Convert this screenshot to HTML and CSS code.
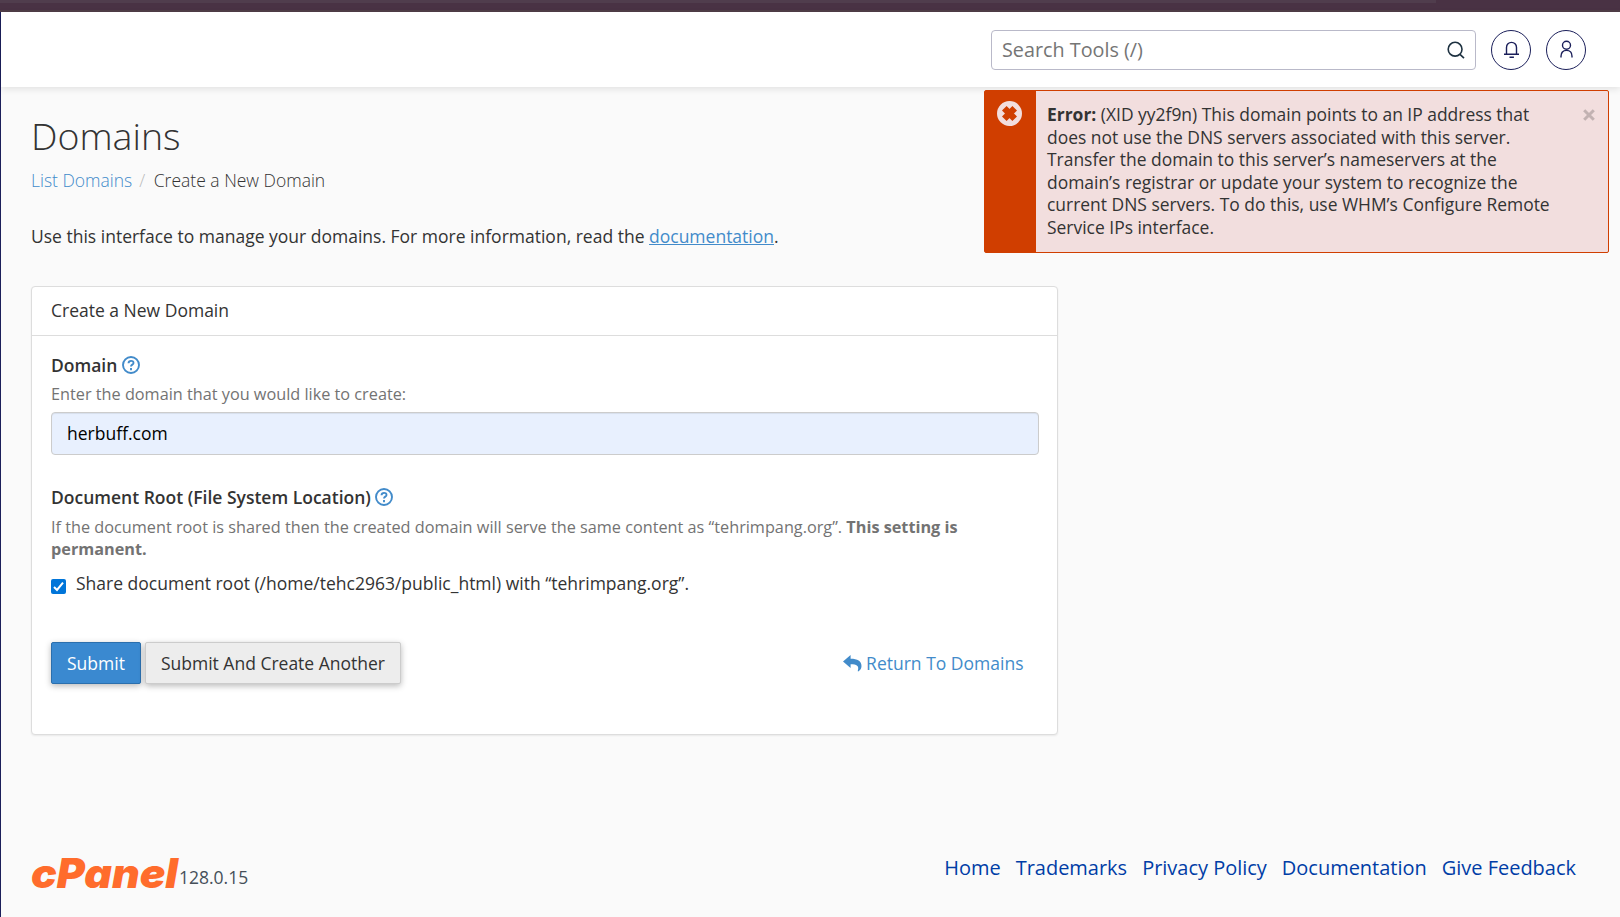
FILE: index.html
```html
<!DOCTYPE html>
<html lang="en">
<head>
<meta charset="utf-8">
<title>Domains</title>
<link rel="stylesheet" href="styles.css">
</head>
<body>
<div class="chrome"><div class="chrome-tab"></div></div>
<div class="page">
  <header class="topbar">
    <div class="search">
      <input class="search-input" type="text" placeholder="Search Tools (/)">
      <svg class="search-icon" viewBox="0 0 18 18"><circle cx="8.1" cy="8.200" r="6.9"/><path d="M13 13.300l4 3.8"/></svg>
    </div>
    <button class="round" aria-label="Notifications"><svg class="round-icon" viewBox="0 0 18 18"><path d="M2 14.200h15M4.500 14.200V7.400a5 5 0 0 1 10 0v6.800M7.500 17.300h4.400"/></svg></button>
    <button class="round" aria-label="Account"><svg class="round-icon" viewBox="0 0 18 18"><circle cx="9.500" cy="5.300" r="4"/><path d="M4 17.500v-1.200c0-3.600 2-5.900 5.500-5.900s5.500 2.300 5.500 5.900v1.200"/></svg></button>
  </header>

  <main class="content">
    <h1 class="title">Domains</h1>
    <nav class="crumbs"><a class="link">List Domains</a><span class="sep">/</span><span>Create a New Domain</span></nav>
    <p class="intro">Use this interface to manage your domains. For more information, read the <a class="link underlined">documentation</a>.</p>

    <section class="panel">
      <div class="panel-head">Create a New Domain</div>
      <div class="panel-body">
        <div class="label">Domain <svg class="help" viewBox="0 0 18 18"><circle cx="9" cy="9" r="8"/><path d="M6.500 7.200C6.700 4.100 11.500 4.100 11.500 6.900C11.500 8.700 9 8.600 9 10.600M9 12.100v2.100"/></svg></div>
        <div class="hint">Enter the domain that you would like to create:</div>
        <input class="field" type="text" value="herbuff.com">
        <div class="label label-root">Document Root (File System Location) <svg class="help" viewBox="0 0 18 18"><circle cx="9" cy="9" r="8"/><path d="M6.500 7.200C6.700 4.100 11.500 4.100 11.500 6.900C11.500 8.700 9 8.600 9 10.600M9 12.100v2.100"/></svg></div>
        <div class="hint hint-root">If the document root is shared then the created domain will serve the same content as “tehrimpang.org”. <b>This setting is permanent.</b></div>
        <div class="check"><span class="box"><svg viewBox="0 0 15 15"><path d="M3 8l3 3 6-7.300"/></svg></span>Share document root (/home/tehc2963/public_html) with “tehrimpang.org”.</div>
        <div class="actions">
          <button class="btn primary">Submit</button>
          <button class="btn">Submit And Create Another</button>
          <a class="link back"><svg class="reply" viewBox="0 0 19 17"><path d="M0 6.500L7.600 0v3.700C14.500 3.700 18.500 6 18.500 11c0 2.300-1.300 4.300-2.900 5.300-.5.300-1 0-.8-.6 1.600-4.800-1-6.300-7.200-6.400V13z"/></svg>Return To Domains</a>
        </div>
      </div>
    </section>
  </main>

  <footer class="footer">
    <div class="brand">
      <svg class="logo" viewBox="0 0 148 34"><text class="logo-text" x="0" y="31" textLength="147" lengthAdjust="spacingAndGlyphs">cPanel</text></svg>
      <span class="version">128.0.15</span>
    </div>
    <nav class="foot-links"><a>Home</a><a>Trademarks</a><a>Privacy Policy</a><a>Documentation</a><a>Give Feedback</a></nav>
  </footer>
</div>

<div class="alert">
  <div class="alert-side"><svg class="alert-icon" viewBox="0 0 25 25"><circle cx="12.500" cy="12.500" r="12.500"/><path d="M7.300 7.300l10.400 10.400M17.700 7.300l-10.400 10.400"/></svg></div>
  <div class="alert-text"><b>Error:</b> (XID yy2f9n) This domain points to an IP address that does not use the DNS servers associated with this server. Transfer the domain to this server’s nameservers at the domain’s registrar or update your system to recognize the current DNS servers. To do this, use WHM’s Configure Remote Service IPs interface.</div>
  <svg class="close" viewBox="0 0 12 12"><path d="M1.200 1.200l9.600 9.600M10.800 1.200l-9.600 9.600"/></svg>
</div>
</body>
</html>
```
FILE: styles.css
```css
* { box-sizing: border-box; }
body {
  margin: 0;
  height: 917px;
  overflow: hidden;
  background: #fafafa;
  color: #333;
  font: 17.5px/24px "Open Sans", "Noto Sans", sans-serif;
}
button, input { font: inherit; }
svg { display: block; }
.chrome {
  height: 12px;
  background: #493244;
  border-bottom: 2px solid #503d47;
}
.chrome-tab {
  width: 1436px;
  height: 3px;
  background: #503d4d;
}
.page {
  height: 905px;
  border-left: 1px solid #1b1f5a;
  display: flex;
  flex-direction: column;
}
.topbar {
  height: 75px;
  flex: none;
  padding-right: 34px;
  display: flex;
  align-items: center;
  justify-content: flex-end;
  gap: 15px;
  background: #fff;
  box-shadow: 0 2px 7px rgba(0, 0, 0, .1);
}
.search {
  width: 485px;
  height: 40px;
  display: flex;
  align-items: center;
  padding: 0 10px;
  border: 1px solid #b9b9c9;
  border-radius: 4px;
}
.search-input {
  flex: 1;
  min-width: 0;
  padding: 0;
  border: 0;
  outline: 0;
  background: none;
  font-size: 19.8px;
}
.search-input::placeholder { color: #757575; }
.search-icon {
  width: 18px;
  height: 18px;
  fill: none;
  stroke: #1d3140;
  stroke-width: 1.6;
}
.round {
  width: 40px;
  height: 40px;
  padding: 0;
  display: flex;
  align-items: center;
  justify-content: center;
  background: #fff;
  border: 1px solid #1b1f5a;
  border-radius: 50%;
}
.round-icon {
  width: 18px;
  height: 18px;
  margin-bottom: 2px;
  fill: none;
  stroke: #1b1f5a;
  stroke-width: 1.4;
}
.content { padding: 27px 30px 0; }
.title {
  margin: 0;
  font-size: 37.500px;
  line-height: 44px;
  font-weight: 300;
}
.crumbs {
  margin-top: 10px;
  font-weight: 300;
}
.sep { margin: 0 8.500px 0 7px; color: #bbb; }
.link { color: #428bca; }
.underlined { text-decoration: underline; }
.intro { margin: 32px 0 38px; }
.panel {
  width: 1027px;
  height: 449px;
  background: #fff;
  border: 1px solid #ddd;
  border-radius: 4px;
  box-shadow: 0 1px 2px rgba(0, 0, 0, .07);
}
.panel-head {
  height: 49px;
  padding: 11px 19px 0;
  border-bottom: 1px solid #ddd;
}
.panel-body { padding: 17px 18px 0 19px; }
.label {
  display: flex;
  align-items: center;
  gap: 4.500px;
  font-weight: 600;
}
.label-root { margin-top: 30px; }
.help {
  width: 18px;
  height: 18px;
  fill: none;
  stroke: #428bca;
  stroke-width: 1.9;
}
.hint {
  margin-top: 6px;
  color: #737373;
  font-size: 16.250px;
  line-height: 22.500px;
}
.hint-root { margin-top: 7px; }
.field {
  display: block;
  width: 100%;
  height: 43px;
  margin-top: 6px;
  padding: 0 15px;
  color: #000;
  background: #e8f0fe;
  border: 1px solid #ccc;
  border-radius: 4px;
  outline: 0;
  box-shadow: inset 0 1px 1px rgba(0, 0, 0, .075);
}
.check {
  display: flex;
  gap: 10px;
  margin-top: 10px;
}
.box {
  width: 15px;
  height: 15px;
  margin-top: 8px;
  background: #0075d9;
  border-radius: 2px;
}
.box path {
  fill: none;
  stroke: #fff;
  stroke-width: 2;
}
.actions {
  display: flex;
  align-items: center;
  gap: 4px;
  margin-top: 47px;
}
.btn {
  height: 42px;
  padding: 0 15px;
  color: #333;
  background: #ededed;
  border: 1px solid #ccc;
  border-radius: 2px;
  box-shadow: 0 2px 6px rgba(0, 0, 0, .28);
}
.primary {
  color: #fff;
  background: #3a89d0;
  border-color: #2b6fad;
}
.back {
  display: flex;
  align-items: center;
  gap: 4px;
  margin-left: auto;
  padding-right: 15.500px;
}
.reply {
  width: 19px;
  height: 17px;
  margin-top: 1px;
  fill: #428bca;
}
.footer {
  margin-top: auto;
  height: 62px;
  padding: 0 44px 0 30px;
  display: flex;
  justify-content: space-between;
}
.brand { display: flex; }
.logo {
  width: 148px;
  height: 34px;
  margin-top: 2px;
  overflow: visible;
}
.logo-text {
  fill: #ff6c2c;
  font-family: Inter, "Open Sans", sans-serif;
  font-size: 41px;
  font-weight: 900;
  font-style: italic;
}
.version {
  margin-top: 10px;
  color: #454f59;
}
.foot-links {
  display: flex;
  gap: 15px;
  padding-top: 1px;
  color: #003da6;
  font-size: 19.980px;
}
.alert {
  position: absolute;
  left: 984px;
  top: 90px;
  width: 625px;
  height: 163px;
  display: flex;
  background: #f2dede;
  border: 1px solid #d03e00;
  border-radius: 2px;
}
.alert-side {
  width: 51px;
  flex: none;
  padding: 10px 0 0 12px;
  background: #d03e00;
}
.alert-icon { width: 25px; height: 25px; }
.alert-icon circle { fill: #f2dede; }
.alert-icon path { stroke: #d03e00; stroke-width: 6.500; }
.alert-text {
  width: 517px;
  padding: 12px 0 0 11px;
  font-size: 17.460px;
  line-height: 22.600px;
}
.close {
  width: 12px;
  height: 12px;
  margin: 18px 13px 0 auto;
  stroke: #c2b2b2;
  stroke-width: 3;
}
```
